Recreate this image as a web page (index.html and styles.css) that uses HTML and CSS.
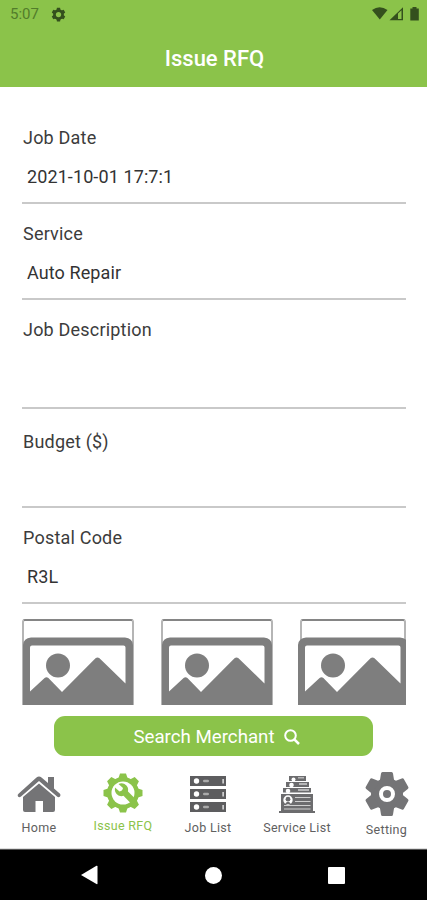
FILE: index.html
```
<!DOCTYPE html>
<html lang="en">
<head>
<meta charset="utf-8">
<title>Issue RFQ</title>
<link rel="stylesheet" href="styles.css">
</head>
<body>
<svg class="defs" width="0" height="0">
  <symbol id="picture" viewBox="0 0 112 86">
    <path fill="#7e7e7e" fill-rule="evenodd" d="M1 86V26Q1.500 19 9 18.500H103Q110.500 19 111 26V86ZM10 26.500Q8 26.500 8 28.500V72.500L22.600 59Q24.500 57.500 26.400 59L40 73L73.500 39.300Q75.500 37.700 77.500 39.300L103.500 64.500V28.500Q103.500 26.500 101.500 26.500Z"/>
    <circle cx="36" cy="46.500" r="12" fill="#7e7e7e"/>
  </symbol>
</svg>
<div class="screen">
  <header class="header">
    <div class="status">
      <span class="clock">5:07</span>
      <svg class="status-gear" width="15" height="15" viewBox="-12 -12 24 24"><g fill="#34501d"><circle r="8.500"/><path d="M-2.500-11h5l1 5h-7zM-2.500 11h5l1-5h-7z"/><path transform="rotate(60)" d="M-2.500-11h5l1 5h-7zM-2.500 11h5l1-5h-7z"/><path transform="rotate(120)" d="M-2.500-11h5l1 5h-7zM-2.500 11h5l1-5h-7z"/></g><circle r="4.200" fill="#8bc34a"/></svg>
      <svg class="signals" width="48" height="14" viewBox="0 0 48 14"><g fill="#34501d"><path d="M0 3Q7.500-2.500 15.500 3L7.800 12.500Z"/><path fill-rule="evenodd" d="M17.500 13.200L31 .2V13.200ZM26 6.500V12H29.500V3.300Z"/><path d="M40.500 0h4v1.500h2.300v12h-8.500v-12h2.200z"/></g></svg>
    </div>
    <h1 class="title">Issue RFQ</h1>
  </header>
  <main class="form">
    <div class="field date"><label>Job Date</label><div class="value">2021-10-01 17:7:1</div></div>
    <div class="field service"><label>Service</label><div class="value">Auto Repair</div></div>
    <div class="field description"><label>Job Description</label></div>
    <div class="field budget"><label>Budget ($)</label></div>
    <div class="field postal"><label>Postal Code</label><div class="value">R3L</div></div>
    <div class="photos">
      <div class="photo"><svg width="112" height="86"><use href="#picture"/></svg></div>
      <div class="photo"><svg width="112" height="86"><use href="#picture"/></svg></div>
      <div class="photo last"><svg width="112" height="86"><use href="#picture"/></svg></div>
    </div>
    <button class="search"><span>Search Merchant</span>
      <svg width="16" height="16" viewBox="0 0 16 16" fill="none" stroke="#fff" stroke-width="2"><circle cx="6.500" cy="6.500" r="5.300"/><path stroke-width="2.500" d="M10.300 10.300L15 15"/></svg>
    </button>
  </main>
  <nav class="tabs">
    <div class="tab home">
      <svg width="44" height="44" viewBox="0 0 44 44" fill="#747476"><path d="M1 24.500Q0 23 1.500 21.700L19.500 5.500Q22 3.500 24.500 5.500L31 11V5H37V16.500L43 21.700Q44 23 43 24.500Q41.700 26 40 24.500L22 9L4 24.500Q2.300 26 1 24.500Z"/><path d="M6 25L22 11.500L38 25V38Q38 40 36 40H26V29H18.500V40H8Q6 40 6 38Z"/></svg>
      <span>Home</span></div>
    <div class="tab issue">
      <svg width="40" height="40" viewBox="-20 -20 40 40"><g fill="#8bc34a"><circle r="16"/><g id="teeth"><path d="M-3-19.500h6l2 6h-10zM-3 19.500h6l2-6h-10z"/><path transform="rotate(90)" d="M-3-19.500h6l2 6h-10zM-3 19.500h6l2-6h-10z"/></g><use href="#teeth" transform="rotate(45)"/></g><circle r="11.500" fill="#fff"/><path fill="#8bc34a" d="M-8-5.500Q-9 0-4.500 2.500Q-1.500 3.700.5 2.700L9 11.500L13 6.500L5 -1.500Q6-6.500 1.500-9Q-1.500-10.300-4.500-9L0-5Q-.5-2-3.500-1.500Z"/></svg>
      <span>Issue RFQ</span></div>
    <div class="tab jobs">
      <svg width="36" height="36" viewBox="0 0 36 36"><g id="server"><path fill="#5d5d5f" d="M0 0H36V10H0Z"/><circle cx="6.500" cy="5" r="2.700" fill="#fff"/><rect x="13" y="3.800" width="6" height="2.500" rx="1.200" fill="#aaa"/><rect x="32.500" y="3" width="1.200" height="4.500" fill="#fff"/></g><use href="#server" y="13"/><use href="#server" y="26"/></svg>
      <span>Job List</span></div>
    <div class="tab services">
      <svg width="36" height="38" viewBox="0 0 36 38"><g fill="#6c6c6e"><path d="M10 0H27V5H10ZM7 6H30V11H7ZM4 12H32V16.500H4ZM2 18H34V35H36V37H0V35H2Z"/></g><g fill="#fff"><path d="M19 1.500H25V2.300H19ZM20 7.500H28V8.500H20ZM19 13.500H30V14.500H19Z"/><circle cx="14.500" cy="3.500" r="2"/><circle cx="12.500" cy="9" r="2.300"/><circle cx="9" cy="15" r="2.300"/></g><path stroke="#d0d0d0" stroke-width="1.200" d="M16 21.500H31.500M16 25.500H31.500M5 29.500H31.500M5 33H31.500"/><circle cx="9" cy="24" r="4.700" fill="#fff"/><circle cx="9" cy="23.200" r="2.400" fill="#6c6c6e"/><path fill="#6c6c6e" d="M6 28Q9 23.500 12 28Z"/></svg>
      <span>Service List</span></div>
    <div class="tab setting">
      <svg width="44" height="44" viewBox="-22 -22 44 44"><g fill="#747476"><circle r="16"/><g id="cog"><path d="M-4.500-22H4.500Q5.800-22 6-20.500L7.200-13H-7.200L-6-20.500Q-5.800-22-4.500-22Z"/><path transform="rotate(180)" d="M-4.500-22H4.500Q5.800-22 6-20.500L7.200-13H-7.200L-6-20.500Q-5.800-22-4.500-22Z"/></g><use href="#cog" transform="rotate(60)"/><use href="#cog" transform="rotate(120)"/></g><circle r="6" fill="#747476" stroke="#fff" stroke-width="4"/></svg>
      <span>Setting</span></div>
  </nav>
  <footer class="system">
    <svg width="17" height="20" viewBox="0 0 17 20"><path fill="#fff" d="M0 10L15.500.8Q16.500.5 16.500 1.500V18.500Q16.500 19.500 15.500 19Z"/></svg>
    <i class="circle"></i>
    <i class="square"></i>
  </footer>
</div>
</body>
</html>
```
FILE: styles.css
```
* { box-sizing: border-box; }
body { margin: 0; background: #fff; font-family: Roboto, sans-serif; color: #3c3c3c; }
svg { display: block; flex: none; }
.defs { position: absolute; }
.screen { width: 427px; height: 900px; display: flex; flex-direction: column; overflow: hidden; }
.header { height: 87px; background: #8bc34a; flex: none; }
.status { height: 28px; display: flex; align-items: center; padding: 0 7px 0 10px; }
.clock { font-size: 15px; letter-spacing: 0; color: #527c2b; width: 41px; line-height: 28px; }
.signals { margin-left: auto; }
.title { margin: 16px 0 0; font-size: 22px; line-height: 30px; font-weight: 500; text-align: center; color: #fff; padding-left: 2px; }
.form { height: 674px; flex: none; padding: 0 21px 0 22px; }
.field { border-bottom: 2px solid #c9c9c9; font-size: 18px; line-height: 30px; letter-spacing: .2px; font-weight: 400; }
.field label { display: block; padding-left: 1px; }
.value { padding-left: 5px; margin-top: 9px; color: #333; letter-spacing: .1px; }
.date { height: 117px; padding-top: 36px; }
.service { height: 96px; padding-top: 15px; }
.description { height: 109px; padding-top: 15px; }
.budget { height: 99px; padding-top: 18px; }
.postal { height: 96px; padding-top: 15px; }
.photos { display: flex; justify-content: space-between; margin-top: 15px; }
.photo { width: 112px; height: 86px; border: 2px solid #858585; border-width: 2px 2px 0; border-left-color: #b5b5b5; border-right-color: #b5b5b5; border-radius: 3px 3px 0 0; }
.photo svg { margin: -2px 0 0 -2px; }
.photo.last { width: 106px; margin-left: 1px; }
.last svg { margin-left: -5px; clip-path: inset(0 3px 0 0); }
.search { display: flex; align-items: center; justify-content: center; gap: 9px; width: 319px; height: 40px; margin: 11px 0 0 32px; padding: 2px 0 0 6px; border: 0; border-radius: 11px; background: #8bc34a; color: #fff; font: 400 18.7px Roboto, sans-serif; letter-spacing: 0; }
.tabs { height: 88px; flex: none; display: grid; grid-template-columns: 78px 90px 80px 98px 81px; border-bottom: 1px solid #ddd; }
.tab { display: flex; flex-direction: column; align-items: center; font-size: 12.5px; line-height: 16px; letter-spacing: .3px; color: #606060; white-space: nowrap; }
.home { padding-top: 11px; }
.home span { margin-top: 4px; }
.issue { padding-top: 12px; color: #8bc34a; }
.issue span { margin-top: 5px; }
.jobs { padding-top: 15px; }
.jobs span { margin-top: 8px; }
.services { padding-top: 15px; }
.services span { margin-top: 6px; }
.setting { padding-top: 11px; }
.setting span { margin-top: 6px; }
.system { height: 51px; flex: none; background: #000; border-top: 1px solid #555; display: flex; align-items: center; padding-left: 81px; }
.circle { width: 17px; height: 17px; border-radius: 50%; background: #fff; margin-left: 107px; }
.square { width: 17px; height: 17px; border-radius: 1px; background: #fff; margin-left: 106px; }
```
